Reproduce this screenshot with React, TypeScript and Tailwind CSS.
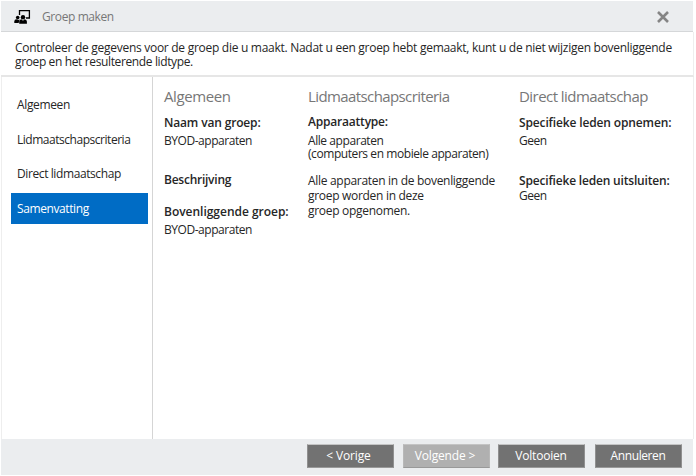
import type { ReactNode } from "react";

function Heading({ className = "", children }: { className?: string; children: ReactNode }) {
  return <h2 className={`h-5 text-[15px] leading-5 text-[#777777] ${className}`}>{children}</h2>;
}

function Label({ className = "", children }: { className?: string; children: ReactNode }) {
  return <div className={`h-4 font-semibold leading-4 text-[#262626] ${className}`}>{children}</div>;
}

function NavItem({ active, className = "", children }: { active?: boolean; className?: string; children: ReactNode }) {
  return (
    <li className={`flex h-[31px] items-center pl-1.5 ${active ? "bg-[#006cc5] text-white" : ""} ${className}`}>
      {children}
    </li>
  );
}

function FooterButton({ disabled, className = "", children }: { disabled?: boolean; className?: string; children: ReactNode }) {
  return (
    <button
      className={`flex h-6 w-[87px] items-center justify-center border border-b-[#999999] border-t-[#c4c4c4] text-white ${
        disabled ? "border-x-[#b8b8b8] bg-[#b0b0b0]" : "border-x-[#909090] bg-[#727272]"
      } ${className}`}
    >
      {children}
    </button>
  );
}

export default function App() {
  return (
    <div className="h-[476px] w-[696px] overflow-hidden whitespace-nowrap bg-white pl-px pr-[2px] pt-px font-['Open_Sans','Noto_Sans',sans-serif] text-[12px] leading-4 text-[#262626]">
      <header className="mr-px flex h-[31px] items-center border-b border-[#d5d7d9] bg-[#ebedef] pl-[13px] pr-6">
        <svg className="mt-0.5 h-4 w-[17px]" viewBox="0 0 17 16" fill="#000">
          <path d="M5.5 6V1.7H15.4V9H12" fill="none" stroke="#000" strokeWidth="1.3" />
          <circle cx="3.7" cy="8.6" r="1.8" />
          <circle cx="9" cy="8.2" r="2.2" />
          <path d="M.3 14v-1.8Q.5 10.5 2.4 10.3L4.5 11 5.5 10.3 4.7 14zM5.2 14.7v-2.3Q5.4 10.6 7.4 10.2L9 11.7l1.6-1.5q2.2.4 2.3 2.3v2.2z" />
        </svg>
        <h1 className="ml-[11px] mt-0.5 tracking-[-0.4px] text-[#777777]">Groep maken</h1>
        <svg className="ml-auto mt-0.5 h-3 w-3" viewBox="0 0 12 12">
          <path d="M1 1 11 11M11 1 1 11" stroke="#858585" strokeWidth="2.6" />
        </svg>
      </header>
      <p className="h-[45px] border-b-2 border-r border-b-[#e6e6e6] border-r-[#eeeeee] pl-3.5 pt-[9px] leading-[14px]">
        <span className="tracking-[-0.28px]">
          Controleer de gegevens voor de groep die u maakt. Nadat u een groep hebt gemaakt, kunt u de niet wijzigen bovenliggende
        </span>
        <br />
        <span className="tracking-[-0.37px]">groep en het resulterende lidtype.</span>
      </p>
      <main className="flex h-[362px] border-x border-[#eeeeee]">
        <ul className="w-[151px] border-r border-[#d5d5d5] pl-[9px] pr-1 pt-3">
          <NavItem className="pt-px tracking-[-0.35px]">Algemeen</NavItem>
          <NavItem className="mt-1 tracking-[-0.47px]">Lidmaatschapscriteria</NavItem>
          <NavItem className="mt-[3px] pt-px tracking-[-0.4px]">Direct lidmaatschap</NavItem>
          <NavItem active className="mt-1 pt-px tracking-[-0.4px]">Samenvatting</NavItem>
        </ul>
        <section className="w-[144px] pl-[11px] pt-[9px]">
          <Heading className="tracking-[-0.4px]">Algemeen</Heading>
          <Label className="mt-[9px] tracking-[-0.15px]">Naam van groep:</Label>
          <div className="mt-[2px] tracking-[-0.45px]">BYOD-apparaten</div>
          <Label className="mt-[23px] tracking-[-0.25px]">Beschrijving</Label>
          <Label className="mt-4 tracking-[-0.02px]">Bovenliggende groep:</Label>
          <div className="mt-[2px] tracking-[-0.45px]">BYOD-apparaten</div>
        </section>
        <section className="w-[211px] pl-[11px] pt-[9px]">
          <Heading className="tracking-[-0.6px]">Lidmaatschapscriteria</Heading>
          <Label className="mt-2 tracking-[-0.2px]">Apparaattype:</Label>
          <p className="mt-1 leading-[13px] tracking-[-0.43px]">
            Alle apparaten
            <br />
            (computers en mobiele apparaten)
          </p>
          <p className="mt-[13px] leading-[15px] tracking-[-0.3px]">
            Alle apparaten in de bovenliggende
            <br />
            groep worden in deze
            <br />
            groep opgenomen.
          </p>
        </section>
        <section className="pl-[11px] pt-[9px]">
          <Heading className="tracking-[-0.55px]">Direct lidmaatschap</Heading>
          <Label className="mt-[9px] tracking-[-0.14px]">Specifieke leden opnemen:</Label>
          <div className="mt-[2px] tracking-[-0.5px]">Geen</div>
          <Label className="mt-6 tracking-[-0.18px]">Specifieke leden uitsluiten:</Label>
          <div className="-mt-px tracking-[-0.5px]">Geen</div>
        </section>
      </main>
      <footer className="mr-px flex h-9 justify-end bg-[#ebedef] pr-[11px] pt-[5px]">
        <FooterButton className="pr-1 tracking-[-0.15px]">&lt; Vorige</FooterButton>
        <FooterButton disabled className="ml-[9px] pr-[3px] tracking-[-0.15px]">Volgende &gt;</FooterButton>
        <FooterButton className="ml-2 pr-px tracking-[-0.2px]">Voltooien</FooterButton>
        <FooterButton className="ml-[10px] pr-px tracking-[-0.4px]">Annuleren</FooterButton>
      </footer>
    </div>
  );
}
